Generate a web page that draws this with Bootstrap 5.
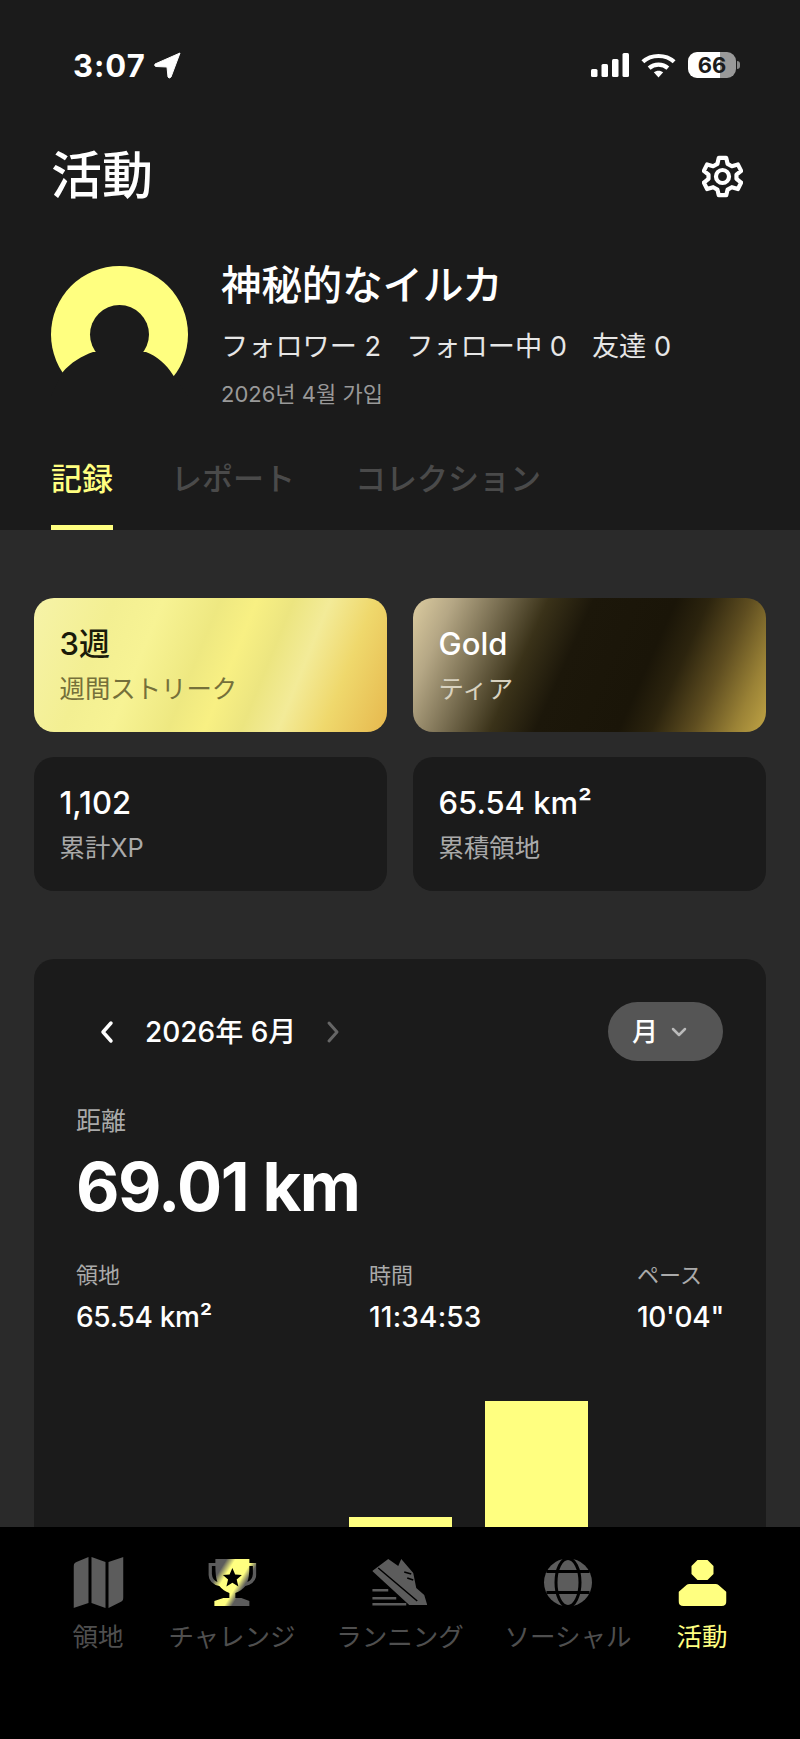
<!doctype html>
<html lang="ja">
<head>
<meta charset="utf-8">
<link href="https://cdn.jsdelivr.net/npm/bootstrap@5.3.0/dist/css/bootstrap.min.css" rel="stylesheet">
<style>
:root{--lime:#ffff80;--jp:Inter,"Noto Sans CJK JP","Noto Sans CJK KR",sans-serif;}
html,body{margin:0;background:#000;}
body{font-family:var(--jp);color:#fff;}
.app-page{width:800px;height:1739px;overflow:hidden;background:#2a2a2a;}
.app-head{background:#1b1b1b;height:530px;flex:none;}
.status-row{height:50px;margin-top:40px;padding:0 60px 0 73px;}
.clock{font-size:31px;font-weight:700;line-height:1;font-family:Inter,sans-serif;letter-spacing:1px;}
.sig-wifi{margin-left:11px;}
.batt{width:48px;height:26px;margin-left:11px;border-radius:9px;background:linear-gradient(90deg,#fff 0 66%,#999 66%);color:#1b1b1b;font:700 22px/26px Inter,sans-serif;text-align:center;}
.batt-cap{width:3px;height:8px;border-radius:0 3px 3px 0;background:#888;margin-left:1px;}
.title-row{padding:0 57px 0 51px;margin-top:51px;height:70px;}
.page-title{font-size:51px;font-weight:500;margin:0;line-height:70px;}
.profile-row{padding:0 0 0 51px;margin-top:55px;gap:33px;}
.name-txt{font-size:40.4px;font-weight:500;line-height:50px;margin-top:-5px;}
.follow-txt{font-size:27.2px;line-height:40px;margin-top:16px;color:#e6e6e6;gap:25px;}
.join-txt{font-size:22px;line-height:30px;margin-top:12px;color:#999;}
.tab-row{padding-left:51px;gap:58px;margin-top:48px;}
.tab-item{font-size:31px;font-weight:500;color:#4a4a4a;line-height:44px;padding-bottom:29px;position:relative;}
.tab-item:last-child{margin-left:2px;}
.tab-on{color:var(--lime);}
.tab-on::after{content:"";position:absolute;left:0;right:0;bottom:0;height:5px;background:var(--lime);}
.app-main{flex:1;min-height:0;overflow:hidden;padding:68px 34px 0;}
.stat-grid{display:grid;grid-template-columns:353px 353px;gap:25px 26px;}
.stat-box{height:134px;border-radius:20px;background:#1b1b1b;padding:26px 25.500px 0;}
.stat-num{font-size:31px;font-weight:500;line-height:40px;}
.stat-lbl{font-size:25.4px;line-height:44px;margin-top:3px;color:#aaa;}
.box-streak{background:linear-gradient(112deg,#f6f3a8 0%,#f3ef92 20%,#f7f394 32%,#eee881 46%,#f8f083 55%,#ece580 64%,#f3eb98 73%,#efd86c 84%,#e6b84e 100%);color:#1a1a0a;}
.box-streak .stat-lbl{color:#75703a;}
.box-gold{background:linear-gradient(114deg,#dccca0 0%,#b5a785 10%,#7b7053 21%,#3a3219 33%,#1c170a 44%,#1a1508 64%,#2c240e 72%,#5e4d20 82%,#9a8236 92%,#c0a445 100%);}
.box-gold .stat-lbl{color:#d8d2c0;}
.chart-card{margin-top:68px;background:#1b1b1b;border-radius:20px;padding:43px 42px 0;height:700px;}
.month-txt{font-size:28px;font-weight:500;line-height:40px;margin:0 29px 0 30px;}
.nav-first{margin-left:23px;}
.range-pill{width:115px;height:59px;margin-right:1px;padding-left:24px;border-radius:30px;background:#555;font-size:26px;font-weight:500;gap:13px;}
.metric-lbl{font-size:25px;line-height:36px;color:#aaa;margin-top:42px;}
.metric-big{font-size:67px;font-weight:700;line-height:80px;letter-spacing:-1.5px;margin-top:8px;}
.mini-lbl{font-size:22px;line-height:30px;color:#aaa;}
.mini-val{font-size:28px;font-weight:500;line-height:40px;margin-top:7px;letter-spacing:-.3px;white-space:nowrap;}
.mini-time{letter-spacing:.2px;}
.mini-row{margin-top:33px;grid-template-columns:293px 268px auto;}
.chart-wrap{height:196px;margin-top:11px;gap:33px;padding-left:273px;}
.chart-bar{width:103px;background:var(--lime);}
.tabbar{height:212px;flex:none;background:#000;}
.tabbar-item{position:absolute;top:30px;transform:translateX(-50%);text-align:center;white-space:nowrap;font-size:25.500px;line-height:36px;color:#4f4f4f;}
.tabbar-item svg{display:block;height:51px;margin:0 auto 11px;}
.tabbar-on{color:var(--lime);}
</style>
</head>
<body>
<div class="app-page d-flex flex-column position-relative">
  <header class="app-head">
    <div class="status-row d-flex align-items-center justify-content-between">
      <div class="d-flex align-items-center gap-2">
        <span class="clock">3:07</span>
        <svg width="28" height="28" viewBox="0 0 28 28"><path d="M26 2 L1 13 Q0 15 2 15.500 L13 16 L14 26 Q15 28 17 26 Z" fill="#fff" stroke="#fff" stroke-width="1" stroke-linejoin="round"/></svg>
      </div>
      <div class="d-flex align-items-center">
        <svg width="38" height="24" viewBox="0 0 38 24" fill="#fff"><rect x="0" y="16" width="6.500" height="8" rx="1.500"/><rect x="10.500" y="11" width="6.500" height="13" rx="1.500"/><rect x="21" y="6" width="6.500" height="18" rx="1.500"/><rect x="31.500" y="0" width="6.500" height="24" rx="1.500"/></svg>
        <svg class="sig-wifi" width="37" height="25" viewBox="0 0 34 24" fill="none" stroke="#fff" stroke-width="4"><path d="M2 8.500 C10 1 24 1 32 8.500"/><path d="M8 14.500 C13 10 21 10 26 14.500"/><path d="M17 23.500 L12.500 18.500 C15 16.500 19 16.500 21.500 18.500 Z" fill="#fff" stroke="none"/></svg>
        <div class="batt">66</div>
        <div class="batt-cap"></div>
      </div>
    </div>
    <div class="title-row d-flex align-items-center justify-content-between">
      <h1 class="page-title">活動</h1>
      <svg width="41" height="43" viewBox="0 0 44 46" fill="none" stroke="#fff" stroke-width="4.500" stroke-linejoin="round"><path d="M18 3 H26 L27.500 9.500 L32 12 L38.500 10 L42 17 L37 21 V25.500 L42 29.500 L38.500 36.500 L32 34.500 L27.500 37 L26 43 H18 L16.500 37 L12 34.500 L5.500 36.500 L2 29.500 L7 25.500 V21 L2 17 L5.500 10 L12 12 L16.500 9.500 Z"/><circle cx="22" cy="23" r="7"/></svg>
    </div>
    <div class="profile-row d-flex align-items-start">
      <svg class="flex-none" width="137" height="137" viewBox="0 0 137 137"><circle cx="68.500" cy="68.500" r="68.500" fill="#ffff80"/><circle cx="68.500" cy="68.500" r="29.500" fill="#1b1b1b"/><path d="M0 137 V130 L11 107 C20 96 31 90 42 86 H95 C106 90 115 98 122 109 L137 130 V137 Z" fill="#1b1b1b"/></svg>
      <div>
        <div class="name-txt">神秘的なイルカ</div>
        <div class="follow-txt d-flex"><span>フォロワー 2</span><span>フォロー中 0</span><span>友達 0</span></div>
        <div class="join-txt">2026년 4월 가입</div>
      </div>
    </div>
    <nav class="tab-row d-flex">
      <div class="tab-item tab-on">記録</div>
      <div class="tab-item">レポート</div>
      <div class="tab-item">コレクション</div>
    </nav>
  </header>
  <main class="app-main">
    <div class="stat-grid">
      <div class="stat-box box-streak"><div class="stat-num">3週</div><div class="stat-lbl">週間ストリーク</div></div>
      <div class="stat-box box-gold"><div class="stat-num">Gold</div><div class="stat-lbl">ティア</div></div>
      <div class="stat-box"><div class="stat-num">1,102</div><div class="stat-lbl">累計XP</div></div>
      <div class="stat-box"><div class="stat-num">65.54 km²</div><div class="stat-lbl">累積領地</div></div>
    </div>
    <section class="chart-card">
      <div class="d-flex align-items-center justify-content-between">
        <div class="d-flex align-items-center">
          <svg class="nav-first" width="16" height="24" viewBox="0 0 16 24" fill="none" stroke="#fff" stroke-width="3.500" stroke-linecap="round" stroke-linejoin="round"><path d="M12 3 L4 12 L12 21"/></svg>
          <span class="month-txt">2026年 6月</span>
          <svg width="16" height="24" viewBox="0 0 16 24" fill="none" stroke="#666" stroke-width="3" stroke-linecap="round" stroke-linejoin="round"><path d="M4 3 L12 12 L4 21"/></svg>
        </div>
        <div class="range-pill d-flex align-items-center">月<svg width="16" height="10" viewBox="0 0 16 10" fill="none" stroke="#bbb" stroke-width="2.500" stroke-linecap="round" stroke-linejoin="round"><path d="M2 2 L8 8 L14 2"/></svg></div>
      </div>
      <div class="metric-lbl">距離</div>
      <div class="metric-big">69.01 km</div>
      <div class="mini-row d-grid">
        <div><div class="mini-lbl">領地</div><div class="mini-val">65.54 km²</div></div>
        <div><div class="mini-lbl">時間</div><div class="mini-val mini-time">11:34:53</div></div>
        <div><div class="mini-lbl">ペース</div><div class="mini-val">10'04"</div></div>
      </div>
      <div class="chart-wrap d-flex align-items-end">
        <div class="chart-bar" style="height:27px"></div>
        <div class="chart-bar" style="height:143px"></div>
      </div>
    </section>
  </main>
  <footer class="tabbar position-relative">
    <div class="tabbar-item" style="left:98px">
      <svg width="50" viewBox="0 0 50 51" fill="#5c5c5c"><path d="M0 10 Q0 6 3 5 L15 0 V46 L0 51 Z"/><path d="M18 0 L32 5 V51 L18 46 Z"/><path d="M35 5 L50 0 V40 Q50 44 47 45 L35 51 Z"/></svg>
      領地
    </div>
    <div class="tabbar-item" style="left:232px">
      <svg width="48" viewBox="0 0 48 51"><defs><linearGradient id="cupfill" x1="0" y1="0" x2="1" y2="0.600"><stop offset=".28" stop-color="#5c5c5c"/><stop offset=".42" stop-color="#ffff80"/><stop offset=".68" stop-color="#ffff80"/><stop offset=".8" stop-color="#5c5c5c"/></linearGradient></defs><path fill="url(#cupfill)" fill-rule="evenodd" d="M7 2 H41 V6 H48 V18 Q47 27 37 29 Q33 34 27 36 V41 H33 L41 44 V49 H6 V44 L15 41 H21 V36 Q15 34 11 29 Q1 27 0 18 V6 H7 Z M3.500 9 V17 Q4 23 9 25 Q7 20 7 9 Z M44.500 9 H41 Q41 20 39 25 Q44 23 44.500 17 Z"/><path fill="#000" d="M24 11 L26.800 17.600 L33.500 18 L28.300 22.500 L30 29.500 L24 25.700 L18 29.500 L19.700 22.500 L14.500 18 L21.200 17.600 Z"/></svg>
      チャレンジ
    </div>
    <div class="tabbar-item" style="left:400px">
      <svg width="55" viewBox="14 12 55 51" fill="#5c5c5c"><path d="M14 26 L30 14 L40 21 L43 14 L55 28 L58 43 L66 50 L69 60 H51 Z"/><path d="M20 23 L59 56 M46 27 L53 29 M49 33 L55 35" stroke="#000" stroke-width="1.500" fill="none"/><rect x="14" y="44" width="16" height="2.500"/><rect x="14" y="52" width="24" height="2.500"/><rect x="14" y="58" width="34" height="2.500"/></svg>
      ランニング
    </div>
    <div class="tabbar-item" style="left:568px">
      <svg width="49" viewBox="0 0 49 51" fill="#5c5c5c"><circle cx="24.500" cy="25.500" r="24"/><g fill="none" stroke="#000" stroke-width="3"><ellipse cx="24.500" cy="25.500" rx="12" ry="24"/><path d="M3 14.500 H46 M3 35.500 H46"/></g></svg>
      ソーシャル
    </div>
    <div class="tabbar-item tabbar-on" style="left:702px">
      <svg width="48" viewBox="0 0 48 51" fill="#ffff80"><path d="M19 3 H29 L35 9 V17 L29 23 H19 L13 17 V9 Z"/><path d="M11 27 H37 Q39 27 40 28 L48 35 V44 Q48 49 43 49 H5 Q0 49 0 44 V35 L8 28 Q9 27 11 27 Z"/></svg>
      活動
    </div>
  </footer>
</div>
<script src="https://cdn.jsdelivr.net/npm/bootstrap@5.3.0/dist/js/bootstrap.bundle.min.js"></script>
</body>
</html>
